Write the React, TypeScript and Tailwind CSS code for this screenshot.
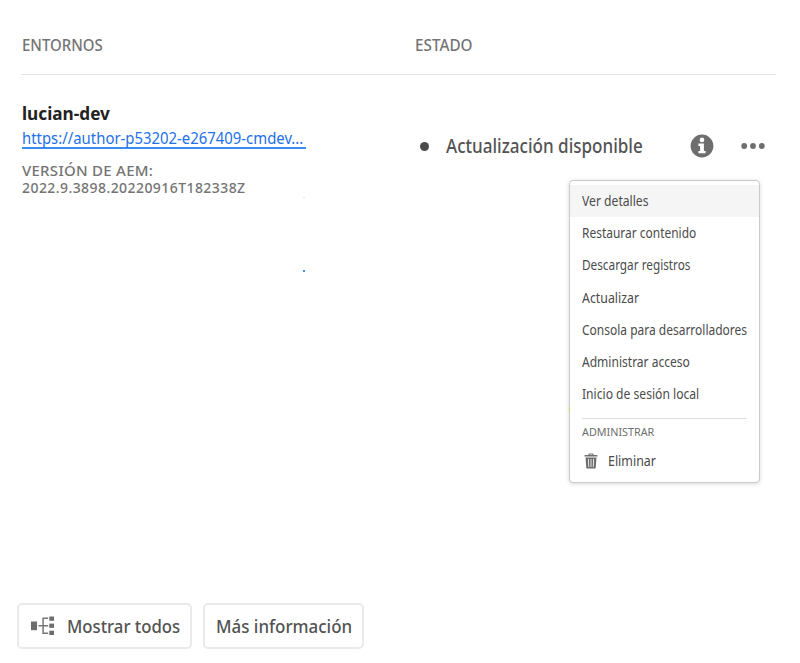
import React from 'react';

const menuItems = [
  { label: 'Ver detalles', row: 'h-[32px] bg-[#f5f5f5]', text: 'scale-x-[0.9]' },
  { label: 'Restaurar contenido', row: 'h-[32px]', text: 'scale-x-[0.886]' },
  { label: 'Descargar registros', row: 'h-[32px]', text: 'scale-x-[0.872]' },
  { label: 'Actualizar', row: 'h-[33px] pt-px', text: 'scale-x-[0.915]' },
  { label: 'Consola para desarrolladores', row: 'h-[32px]', text: 'scale-x-[0.888]' },
  { label: 'Administrar acceso', row: 'h-[32px]', text: 'scale-x-[0.892]' },
  { label: 'Inicio de sesión local', row: 'h-[32px]', text: 'scale-x-[0.897]' },
];

function InfoIcon() {
  return (
    <svg width="24" height="24" viewBox="0 0 24 24" className="block shrink-0">
      <circle cx="12" cy="12" r="11.4" fill="#6e6e6e" />
      <circle cx="12" cy="5.9" r="2.3" fill="#fff" />
      <path d="M8.4 9.6h5.5v7.4h1.7v2.3H8.4V17h1.7v-5.1H8.4z" fill="#fff" />
    </svg>
  );
}

function MoreIcon() {
  return (
    <svg width="24" height="8" viewBox="0 0 24 8" className="block" fill="#6e6e6e">
      <circle cx="3.2" cy="4" r="2.9" />
      <circle cx="12" cy="4" r="2.9" />
      <circle cx="20.8" cy="4" r="2.9" />
    </svg>
  );
}

function TreeIcon() {
  return (
    <svg width="24" height="20" viewBox="0 0 24 20" className="block shrink-0">
      <g fill="#6e6e6e">
        <rect x="0" y="5.5" width="6" height="8.7" />
        <rect x="18.3" y="0.5" width="4.7" height="4.3" />
        <rect x="18.3" y="7.6" width="4.7" height="4.3" />
        <rect x="18.3" y="14.7" width="4.7" height="4.3" />
      </g>
      <path d="M7.5 9.8h9.7M17.2 2.3h-5.1v14.9h5.1" fill="none" stroke="#777" strokeWidth="1.5" />
    </svg>
  );
}

function TrashIcon() {
  return (
    <svg width="14" height="16" viewBox="0 0 14 16" className="block shrink-0">
      <path
        d="M4.5 2V1a.6.6 0 0 1 .6-.6h3.8a.6.6 0 0 1 .6.6v1H13a.5.5 0 0 1 .5.5v1H.5v-1A.5.5 0 0 1 1 2zM5.5 2h3v-.6h-3zM1.5 4.5h11l-.8 10.2a.8.8 0 0 1-.8.7H3.1a.8.8 0 0 1-.8-.7zM4 6l.4 8h.8L4.8 6zM6.6 6v8h.8V6zM9.2 6l-.4 8h.8l.4-8z"
        fill="#6e6e6e"
        fillRule="evenodd"
      />
    </svg>
  );
}

export default function App() {
  return (
    <main className="relative flex h-[663px] w-[800px] flex-col overflow-hidden bg-white font-['Noto_Sans',sans-serif] whitespace-nowrap text-[#4b4b4b]">
      <header className="ml-[21px] flex h-[75px] w-[755px] border-b border-[#e4e4e4] pt-[33px] pl-px text-[15.5px] leading-[25px] font-medium text-[#747474]">
        <div className="w-[393px]"><span className="inline-block origin-left scale-x-[0.965]">ENTORNOS</span></div>
        <div><span className="inline-block origin-left scale-x-[0.985]">ESTADO</span></div>
      </header>
      <section className="flex h-[528px] pl-[22px]">
        <div className="w-[396px] pt-[26px]">
          <h2 className="h-[25px] text-[18px] leading-[25px] font-bold text-[#222]"><span className="inline-block origin-left scale-x-[0.955]">lucian-dev</span></h2>
          <a className="mt-px block h-[22px] w-[284px] border-b-2 border-[#378ef0] text-[16px] leading-[23px] text-[#2271e8]"><span className="inline-block origin-left scale-x-[0.93]">https://author-p53202-e267409-cmdev...</span></a>
          <div className="mt-[13px] text-[15px] leading-[17px] font-medium text-[#747474]">
            <p className="tracking-[0.27px]">VERSIÓN DE AEM:</p>
            <p className="text-[14px] tracking-[0.43px]">2022.9.3898.20220916T182338Z</p>
          </div>
          <div className="mt-px ml-[281px] h-px w-[2px] bg-[#e4e4e4]" />
          <div className="mt-[72px] ml-[281px] size-[2px] bg-[#378ef0]" />
        </div>
        <div className="mt-[56px] flex h-[30px] items-center">
          <span className="ml-[2px] size-[9px] rounded-full bg-[#4b4b4b]" />
          <span className="ml-[17px] w-[244px] text-[19px] leading-[30px] font-medium text-[#535353]"><span className="inline-block origin-left scale-x-[0.897]">Actualización disponible</span></span>
          <InfoIcon />
          <span className="ml-[27px]"><MoreIcon /></span>
        </div>
      </section>
      <footer className="ml-[17px] flex gap-[11px] text-[18.5px] font-medium text-[#535353]">
        <button className="flex h-[46px] w-[175px] items-center rounded-[5px] border-2 border-[#eaeaea] pl-[12px]">
          <TreeIcon />
          <span className="ml-[12px] inline-block origin-left scale-x-[0.904]">Mostrar todos</span>
        </button>
        <button className="flex h-[46px] w-[161px] items-center rounded-[5px] border-2 border-[#eaeaea] pl-[11px]"><span className="inline-block origin-left scale-x-[0.915]">Más información</span></button>
      </footer>
      <nav className="absolute top-[180px] left-[569px] h-[303px] w-[191px] rounded-[4px] border border-[#cacaca] bg-white pt-[4px] text-[13.5px] shadow-[0_1px_4px_rgba(0,0,0,0.15)]">
        {menuItems.map((item) => (
          <div key={item.label} className={`flex items-center pl-[12px] ${item.row}`}><span className={`inline-block origin-left ${item.text}`}>{item.label}</span></div>
        ))}
        <div className="mx-[12px] mt-[8px] h-px bg-[#dedede]" />
        <div className="mt-[3px] h-[20px] pl-[12px] text-[11px] leading-[20px] text-[#6e6e6e]"><span className="inline-block origin-left scale-x-[0.98]">ADMINISTRAR</span></div>
        <div className="flex h-[38px] items-center pl-[14px]">
          <TrashIcon />
          <span className="ml-[10px] inline-block origin-left scale-x-[0.92]">Eliminar</span>
        </div>
      </nav>
      <span className="absolute top-[407px] left-[568px] h-[6px] w-px bg-[#f5efae]" />
    </main>
  );
}
